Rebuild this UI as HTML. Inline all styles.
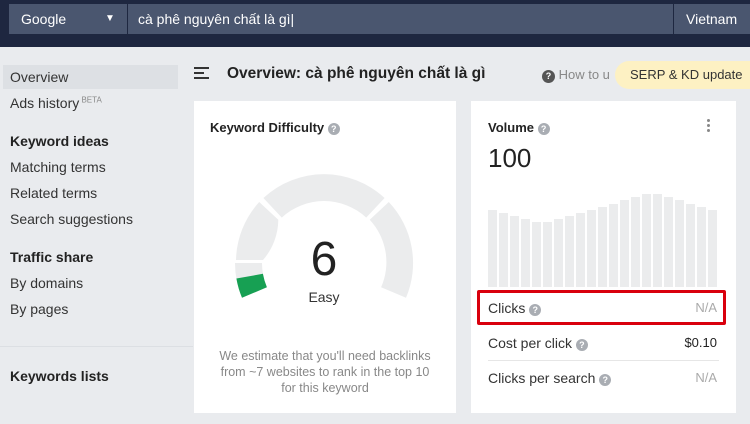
<!DOCTYPE html><html><head><meta charset="utf-8"><style>
*{margin:0;padding:0;box-sizing:border-box}
body{width:750px;height:424px;overflow:hidden;background:#e9ebee;font-family:"Liberation Sans",sans-serif;position:relative;color:#333}
.top{position:absolute;left:0;top:0;width:750px;height:47px;background:#1e2740}
.inp{position:absolute;top:4px;height:30px;background:#4a566f;color:#fff;font-size:14px;line-height:30px}
.a{position:absolute;white-space:nowrap}
.nav{font-size:14px;color:#333}
.b{font-weight:bold;color:#222}
.card{position:absolute;top:101px;height:312px;background:#fff}
.q{display:inline-block;width:12px;height:12px;border-radius:50%;background:#a9adb3;color:#fff;font-size:9px;line-height:12px;text-align:center;font-weight:bold;vertical-align:0px}
</style></head><body>
<div class="top"></div>
<div class="inp" style="left:9px;width:118px;padding-left:12px">Google<span style="position:absolute;left:96px;font-size:10px">▼</span></div>
<div class="inp" style="left:128px;width:545px;padding-left:10px">cà phê nguyên chất là gì|</div>
<div class="inp" style="left:674px;width:76px;padding-left:12px">Vietnam</div>
<div style="position:absolute;left:0;top:346px;width:193px;height:1px;background:#dcdfe3"></div>
<div style="position:absolute;left:3px;top:65px;width:175px;height:24px;background:#dde0e4"></div>
<div class="a nav" style="left:10px;top:69px">Overview</div>
<div class="a nav" style="left:10px;top:95px">Ads history<sup style="font-size:8px;color:#888"> BETA</sup></div>
<div class="a nav b" style="left:10px;top:133px">Keyword ideas</div>
<div class="a nav" style="left:10px;top:159px">Matching terms</div>
<div class="a nav" style="left:10px;top:185px">Related terms</div>
<div class="a nav" style="left:10px;top:211px">Search suggestions</div>
<div class="a nav b" style="left:10px;top:249px">Traffic share</div>
<div class="a nav" style="left:10px;top:275px">By domains</div>
<div class="a nav" style="left:10px;top:301px">By pages</div>
<div class="a nav b" style="left:10px;top:368px">Keywords lists</div>
<div class="a" style="left:194px;top:67px;width:15px;font-size:0">
<div style="height:2px;background:#333;margin-bottom:3px"></div><div style="height:2px;width:10px;background:#333;margin-bottom:3px"></div><div style="height:2px;background:#333"></div></div>
<div class="a" style="left:227px;top:65px;font-size:15.5px;font-weight:bold;color:#222">Overview: cà phê nguyên chất là gì</div>
<div class="a" style="left:542px;top:67px;font-size:13px;color:#888"><span class="q" style="width:13px;height:13px;line-height:13px;background:#555">?</span> How to u</div>
<div class="a" style="left:615px;top:61px;width:150px;height:28px;border-radius:14px;background:#fdf1c3;font-size:13px;line-height:28px;padding-left:15px;color:#333">SERP &amp; KD update</div>

<div class="card" style="left:194px;width:262px">
<div class="a" style="left:16px;top:19px;font-size:13px;font-weight:bold;color:#222">Keyword Difficulty <span class="q">?</span></div>
<svg class="a" style="left:0;top:0" width="262" height="312">
<g transform="translate(130,162)" fill="#ebeced">
<path d="M-82.0,34.8 A89 89 0 0 1 -89,0 L-62,0 A62 62 0 0 0 -57.1,24.2Z" fill="#ebeced"/>
<path d="M-82.0,34.8 A89 89 0 0 1 -87.6,15.5 L-61.1,10.8 A62 62 0 0 0 -57.1,24.2Z" fill="#17a053"/>
<path d="M-88,-3 A89 89 0 0 1 -64.8,-61 L-45.7,-43.2 A62 62 0 0 1 -61,-3Z"/>
<path d="M-60.6,-65 A89 89 0 0 1 60.6,-65 L42.2,-45.4 A62 62 0 0 0 -42.2,-45.4Z"/>
<path d="M64.8,-61 A89 89 0 0 1 82,34.8 L57.1,24.2 A62 62 0 0 0 45.7,-43.2Z"/>
</g>
<text x="130" y="174" text-anchor="middle" font-size="48" fill="#222" font-family="Liberation Sans">6</text>
<text x="130" y="201" text-anchor="middle" font-size="14" fill="#333" font-family="Liberation Sans">Easy</text>
</svg>
<div class="a" style="left:0;width:262px;top:247px;text-align:center;font-size:12.5px;line-height:16px;color:#888;white-space:normal">We estimate that you'll need backlinks<br>from ~7 websites to rank in the top 10<br>for this keyword</div>
</div>

<div class="card" style="left:471px;width:265px">
<div class="a" style="left:17px;top:19px;font-size:13px;font-weight:bold;color:#222">Volume <span class="q">?</span></div>
<div class="a" style="left:236px;top:18px;width:3px;font-size:0"><div style="height:3px;background:#888;margin-bottom:2px;border-radius:50%"></div><div style="height:3px;background:#888;margin-bottom:2px;border-radius:50%"></div><div style="height:3px;background:#888;border-radius:50%"></div></div>
<div class="a" style="left:17px;top:42px;font-size:26px;color:#222">100</div>
<svg class="a" style="left:0;top:0" width="265" height="312"><g fill="#ebeced">
<rect x="17" y="109" width="9" height="77"/><rect x="28" y="112" width="9" height="74"/><rect x="39" y="115" width="9" height="71"/><rect x="50" y="118" width="9" height="68"/><rect x="61" y="121" width="9" height="65"/><rect x="72" y="121" width="9" height="65"/><rect x="83" y="118" width="9" height="68"/><rect x="94" y="115" width="9" height="71"/><rect x="105" y="112" width="9" height="74"/><rect x="116" y="109" width="9" height="77"/><rect x="127" y="106" width="9" height="80"/><rect x="138" y="103" width="9" height="83"/><rect x="149" y="99" width="9" height="87"/><rect x="160" y="96" width="9" height="90"/><rect x="171" y="93" width="9" height="93"/><rect x="182" y="93" width="9" height="93"/><rect x="193" y="96" width="9" height="90"/><rect x="204" y="99" width="9" height="87"/><rect x="215" y="103" width="9" height="83"/><rect x="226" y="106" width="9" height="80"/><rect x="237" y="109" width="9" height="77"/></g></svg>
<div class="a" style="left:6px;top:189px;width:249px;height:35px;border:3px solid #d9000d;border-radius:2px"></div>
<div class="a" style="left:17px;top:199px;font-size:14px">Clicks <span class="q">?</span></div>
<div class="a" style="right:19px;top:199px;font-size:13px;color:#aaa">N/A</div>
<div class="a" style="left:17px;top:234px;font-size:14px">Cost per click <span class="q">?</span></div>
<div class="a" style="right:19px;top:234px;font-size:13px;color:#222">$0.10</div>
<div class="a" style="left:17px;top:259px;width:231px;height:1px;background:#e6e6e6"></div>
<div class="a" style="left:17px;top:269px;font-size:14px">Clicks per search <span class="q">?</span></div>
<div class="a" style="right:19px;top:269px;font-size:13px;color:#aaa">N/A</div>
</div>
</body></html>
